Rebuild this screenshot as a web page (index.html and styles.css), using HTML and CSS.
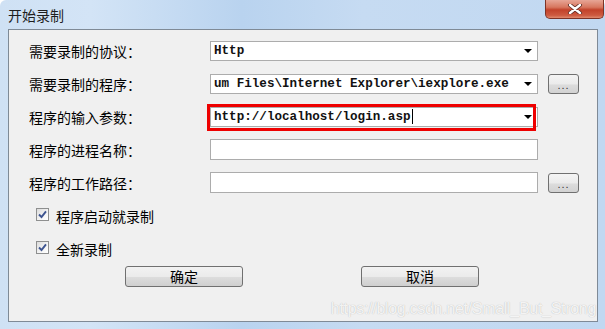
FILE: index.html
```html
<!DOCTYPE html>
<html lang="zh">
<head>
<meta charset="utf-8">
<title>开始录制</title>
<link rel="stylesheet" href="styles.css">
</head>
<body>
<div class="window">
  <div class="titlebar">
    <span class="title">开始录制</span>
    <span class="close"><svg width="16" height="10" viewBox="0 0 16 10"><path d="M3 1 L13 9 M13 1 L3 9" stroke="#5a2a22" stroke-width="4" stroke-linecap="round"/><path d="M3 1 L13 9 M13 1 L3 9" stroke="#ffffff" stroke-width="2.4" stroke-linecap="round"/></svg></span>
  </div>
  <div class="panel">
    <div class="form">
      <div class="row">
        <label class="lbl">需要录制的协议：</label>
        <div class="combo"><span class="val">Http</span><span class="arrow"></span></div>
      </div>
      <div class="row">
        <label class="lbl">需要录制的程序：</label>
        <div class="combo"><span class="val">um Files\Internet Explorer\iexplore.exe</span><span class="arrow"></span></div>
        <button class="dots">...</button>
      </div>
      <div class="row">
        <label class="lbl">程序的输入参数：</label>
        <div class="combo marked"><span class="val">http://localhost/login.asp<span class="caret"></span></span><span class="arrow"></span><span class="mark"></span></div>
      </div>
      <div class="row">
        <label class="lbl">程序的进程名称：</label>
        <div class="input"></div>
      </div>
      <div class="row">
        <label class="lbl">程序的工作路径：</label>
        <div class="input"></div>
        <button class="dots">...</button>
      </div>
    </div>
    <div class="checks">
      <div class="check"><span class="box"><svg width="13" height="13" viewBox="0 0 13 13"><path d="M3 6.5 L5.5 9 L10 3.3" fill="none" stroke="#3d5490" stroke-width="1.9"/></svg></span>程序启动就录制</div>
      <div class="check"><span class="box"><svg width="13" height="13" viewBox="0 0 13 13"><path d="M3 6.5 L5.5 9 L10 3.3" fill="none" stroke="#3d5490" stroke-width="1.9"/></svg></span>全新录制</div>
    </div>
    <div class="actions">
      <button class="btn">确定</button>
      <button class="btn">取消</button>
    </div>
    <div class="watermark">https://blog.csdn.net/Small_But_Strong</div>
  </div>
</div>
</body>
</html>
```

FILE: styles.css
```css
html, body {
  margin: 0;
  padding: 0;
  width: 605px;
  height: 329px;
  overflow: hidden;
}
body {
  font-family: "Noto Sans CJK SC", "Liberation Sans", sans-serif;
  color: #000;
}
.window {
  width: 605px;
  height: 329px;
  box-sizing: border-box;
  background: linear-gradient(to right, #cfe1f4 0%, #d3e4f6 15%, #b9d3ef 40%, #c6dbf2 60%, #c1d8f1 100%);
  display: flex;
  flex-direction: column;
  padding: 0 7px 7px 8px;
  border-top-left-radius: 6px;
  border-top-right-radius: 6px;
}
.titlebar {
  height: 29px;
  display: flex;
  align-items: flex-start;
  justify-content: space-between;
  flex-shrink: 0;
}
.title {
  font-size: 14px;
  line-height: 14px;
  margin-top: 8px;
  color: #1e1e1e;
}
.close {
  width: 59px;
  height: 19px;
  box-sizing: border-box;
  border: 1px solid #7d3326;
  border-top: none;
  border-radius: 0 0 5px 5px;
  background: linear-gradient(to bottom, #e7a696 0%, #d7775f 40%, #c2422a 55%, #cd5a40 85%, #e08a6e 100%);
  display: flex;
  align-items: center;
  justify-content: center;
  margin-right: -6px;
}
.panel {
  flex: 1;
  position: relative;
  background: #f0f0f0;
  border: 1px solid #7f8a96;
  padding: 4px 0 0 20px;
  display: flex;
  flex-direction: column;
}
.form {
  display: flex;
  flex-direction: column;
}
.row {
  height: 33px;
  display: flex;
  align-items: center;
}
.lbl {
  width: 181px;
  font-size: 14px;
  flex-shrink: 0;
}
.combo, .input {
  width: 328px;
  height: 20px;
  box-sizing: border-box;
  background: #fff;
  border: 1px solid #acacac;
  display: flex;
  align-items: center;
  position: relative;
  flex-shrink: 0;
}
.input {
  height: 21px;
}
.combo .val {
  font-family: "Liberation Mono", monospace;
  font-weight: bold;
  font-size: 12.6px;
  padding-left: 3px;
  flex: 1;
  white-space: nowrap;
  overflow: hidden;
  display: flex;
  align-items: center;
  color: #111;
}
.caret {
  display: inline-block;
  width: 1px;
  height: 15px;
  background: #000;
  margin-left: 1px;
}
.arrow {
  width: 0;
  height: 0;
  border-left: 4px solid transparent;
  border-right: 4px solid transparent;
  border-top: 4px solid #000;
  margin: 0 5px 0 6px;
}
.mark {
  position: absolute;
  left: -4px;
  top: -4px;
  right: 1px;
  bottom: -5px;
  border: 3px solid #ee0000;
}
.dots {
  width: 31px;
  height: 20px;
  margin-left: 10px;
  box-sizing: border-box;
  border: 1px solid #707070;
  border-radius: 3px;
  background: linear-gradient(to bottom, #f4f4f4 0%, #ebebeb 50%, #dcdcdc 55%, #d2d2d2 100%);
  font-family: "Liberation Sans", sans-serif;
  font-size: 11px;
  letter-spacing: 1px;
  color: #333;
  padding: 2px 0 0 0;
  line-height: 10px;
}
.checks {
  display: flex;
  flex-direction: column;
  padding-left: 7px;
}
.check {
  height: 33px;
  display: flex;
  align-items: center;
  font-size: 14px;
}
.box {
  width: 13px;
  height: 13px;
  box-sizing: border-box;
  border: 1px solid #8e8f8f;
  background: linear-gradient(135deg, #dcdcdc 0%, #f5f5f5 60%, #ffffff 100%);
  margin-right: 7px;
  margin-top: -3px;
  position: relative;
  display: flex;
}
.box svg {
  position: absolute;
  left: -1px;
  top: -1px;
}
.actions {
  display: flex;
  gap: 118px;
  padding-left: 96px;
  margin-top: 1px;
}
.btn {
  width: 118px;
  height: 21px;
  box-sizing: border-box;
  border: 1px solid #707070;
  border-radius: 3px;
  background: linear-gradient(to bottom, #f2f2f2 0%, #ebebeb 50%, #dddddd 52%, #cfcfcf 100%);
  font-family: "Noto Sans CJK SC", sans-serif;
  font-size: 14px;
  line-height: 17px;
  padding: 0;
  color: #000;
}
.watermark {
  position: absolute;
  right: 1px;
  bottom: 3px;
  font-family: "Liberation Sans", sans-serif;
  font-size: 16px;
  color: rgba(255, 255, 255, 0.85);
  text-shadow: 0 0 1px rgba(0, 0, 0, 0.28);
  letter-spacing: -0.3px;
  white-space: nowrap;
}
```
